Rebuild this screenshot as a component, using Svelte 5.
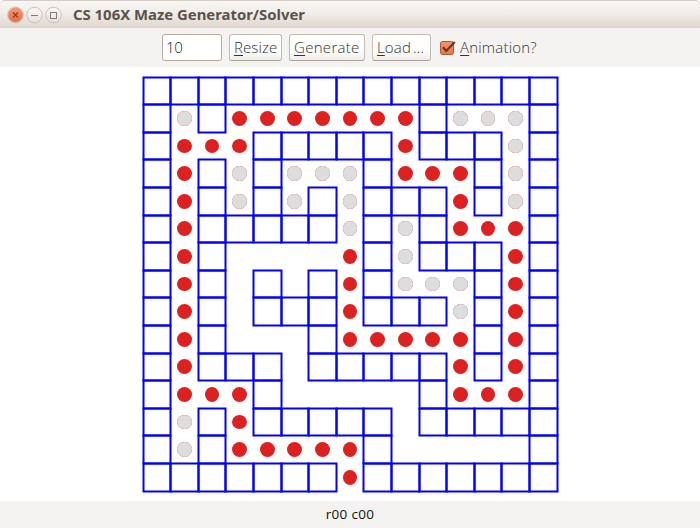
<script>
  const rows = [
    '###############',
    '#g#rrrrrrr#ggg#',
    '#rrr#####r###g#',
    '#r#g#ggg#rrr#g#',
    '#r#g#g#g###r#g#',
    '#r#####g#g#rrr#',
    '#r#....r#g###r#',
    '#r#.#.#r#ggg#r#',
    '#r#.###r###g#r#',
    '#r#...#rrrrr#r#',
    '#r###.#####r#r#',
    '#rrr#.....#rrr#',
    '#g#r#####.#####',
    '#g#rrrrr#.....#',
    '#######r#######'
  ];
  const size = 27.6;
  const radius = 7.4;

  // Grid lines sit on pixel centres so that each has a solid core.
  const edge = (i) => 1.5 + Math.floor(i * size + 0.001);

  // Extent of a dot along one axis, snapped to whole pixels.
  function span(i) {
    const centre = 1 + (i + 0.5) * size;
    const from = Math.round(centre - radius);
    const to = Math.round(centre + radius);
    return { mid: (from + to) / 2, r: (to - from) / 2 };
  }

  const cells = rows.flatMap((row, r) =>
    [...row].map((kind, c) => ({
      kind,
      x: edge(c),
      y: edge(r),
      w: edge(c + 1) - edge(c),
      h: edge(r + 1) - edge(r),
      across: span(c),
      down: span(r)
    }))
  );
  const walls = cells.filter((cell) => cell.kind === '#');
  const dots = cells.filter((cell) => cell.kind === 'r' || cell.kind === 'g');
  let mazeSize = $state('10');
  let animate = $state(true);
</script>

<div class="window">
  <header>
    <svg class="controls" width="58" height="20" viewBox="0 0 58 20">
      <defs>
        <linearGradient id="close" x2="0" y2="1"><stop stop-color="#f79a76" /><stop offset="1" stop-color="#ed6a3d" /></linearGradient>
        <linearGradient id="plain" x2="0" y2="1"><stop stop-color="#fbfaf9" /><stop offset="1" stop-color="#e4dfda" /></linearGradient>
      </defs>
      <circle cx="10.5" cy="10" r="8" fill="none" stroke="#d0c9c3" />
      <circle cx="10.5" cy="10" r="7.2" fill="url(#close)" stroke="#e88964" stroke-width=".7" />
      <path d="M8 7.5l5 5M13 7.5l-5 5" stroke="#7c4534" stroke-width="1.3" />
      <circle cx="29.5" cy="10" r="7.8" fill="url(#plain)" stroke="#c9c2bc" />
      <path d="M26 10.5h7" stroke="#837b75" />
      <circle cx="48.5" cy="10" r="7.8" fill="url(#plain)" stroke="#c9c2bc" />
      <rect x="45.5" y="7.5" width="6" height="6" fill="none" stroke="#837b75" />
    </svg>
    <h1><svg width="234" height="20"><text x="0" y="15" textLength="232" lengthAdjust="spacingAndGlyphs">CS 106X Maze Generator/Solver</text></svg></h1>
  </header>
  <div class="toolbar">
    <input type="text" bind:value={mazeSize} />
    <button class="resize"><u>R</u>esize</button>
    <button class="generate"><u>G</u>enerate</button>
    <button class="load"><u>L</u>oad<i>...</i></button>
    <label>
      <input type="checkbox" bind:checked={animate} />
      <svg width="18" height="20" viewBox="0 0 18 20">
        <defs><linearGradient id="check" x2="0" y2="1"><stop stop-color="#f5956c" /><stop offset="1" stop-color="#ee7145" /></linearGradient></defs>
        <rect x="1.5" y="4.5" width="13" height="13" rx="2" fill="url(#check)" stroke="#a9593d" />
        {#if animate}<path d="M4 10.2l3.2 3.7L15.8 5" fill="none" stroke="#573a30" stroke-width="2.1" />{/if}
      </svg>
      <span><u>A</u>nimation?</span>
    </label>
  </div>
  <main>
    <svg class="maze" width="418" height="418" viewBox="0 0 418 418">
      {#each walls as cell}
        <rect class="wall" x={cell.x} y={cell.y} width={cell.w} height={cell.h} />
      {/each}
      {#each dots as dot}
        <ellipse class="path" cx={dot.across.mid} cy={dot.down.mid} rx={dot.across.r} ry={dot.down.r} />
        {#if dot.kind === 'g'}
          <ellipse class="visited" cx={dot.across.mid} cy={dot.down.mid} rx={dot.across.r} ry={dot.down.r} />
        {/if}
      {/each}
    </svg>
  </main>
  <footer>r00 c00</footer>
</div>

<style>
  :global(body) { margin: 0; background: #fff; }
  .window {
    width: 700px; height: 528px; display: flex; flex-direction: column; overflow: hidden;
    font-family: "Open Sans", "Noto Sans", sans-serif; color: #4c4c4c;
  }
  header {
    box-sizing: border-box; height: 28px; flex: none; display: flex; align-items: center; padding: 0 0 0 5px;
    background: linear-gradient(#f8f6f4, #f1ede9 45%, #dfd6ce); border-top: 1px solid #d4cdc6; border-radius: 5px 5px 0 0;
  }
  .controls { flex: none; }
  h1 { margin: 0 0 0 10px; height: 20px; }
  h1 svg { display: block; }
  h1 text { fill: #5b524b; font: 700 15px "Noto Sans", sans-serif; }
  .toolbar {
    box-sizing: border-box; height: 39px; flex: none; display: flex; padding: 6px 0 6px 162px;
    background: #f4f3f2; font-size: 15px;
  }
  input[type="text"] {
    box-sizing: border-box; width: 60px; height: 27px; margin: 0 7px 0 0; padding: 0 0 1px 3px;
    border: 1px solid #b3a99d; border-radius: 3px; background: #fff; outline: none;
    font: 300 15px "Open Sans", sans-serif; letter-spacing: -0.4px; color: #222;
  }
  button {
    box-sizing: border-box; height: 27px; padding: 0 0 1px 4px; margin-right: 7px; border: 1px solid #c4bcb3; border-bottom-color: #aaa096;
    border-radius: 3px; background: linear-gradient(#fff, #fdfdfc 60%, #f0eeec); text-align: left;
    font: 300 15px "Open Sans", sans-serif; color: #333; white-space: nowrap;
  }
  .resize { width: 53px; letter-spacing: 0.1px; }
  .generate { width: 76px; letter-spacing: 0.3px; }
  .load { width: 59px; letter-spacing: 0.15px; }
  i { font-style: normal; margin-left: 2px; }
  u { text-underline-offset: 2px; text-decoration-thickness: 1px; text-decoration-skip-ink: none; }
  label { display: flex; align-items: center; height: 26px; margin-left: 1px; font-weight: 300; color: #333; letter-spacing: 0.2px; }
  label input { position: absolute; opacity: 0; }
  label svg { flex: none; margin-right: 3px; }
  main { flex: none; height: 434px; display: flex; padding: 9px 0 0 142px; box-sizing: border-box; background: #fff; }
  .wall { fill: none; stroke: #0000ff; stroke-width: 2px; }
  .path { fill: #dd2020; }
  .visited { fill: #ddd; }
  footer {
    flex: 1; display: flex; justify-content: center; align-items: center; background: #f4f3f2;
    padding-bottom: 1px; font-size: 13.5px; letter-spacing: 0.3px; color: #111;
  }
</style>
